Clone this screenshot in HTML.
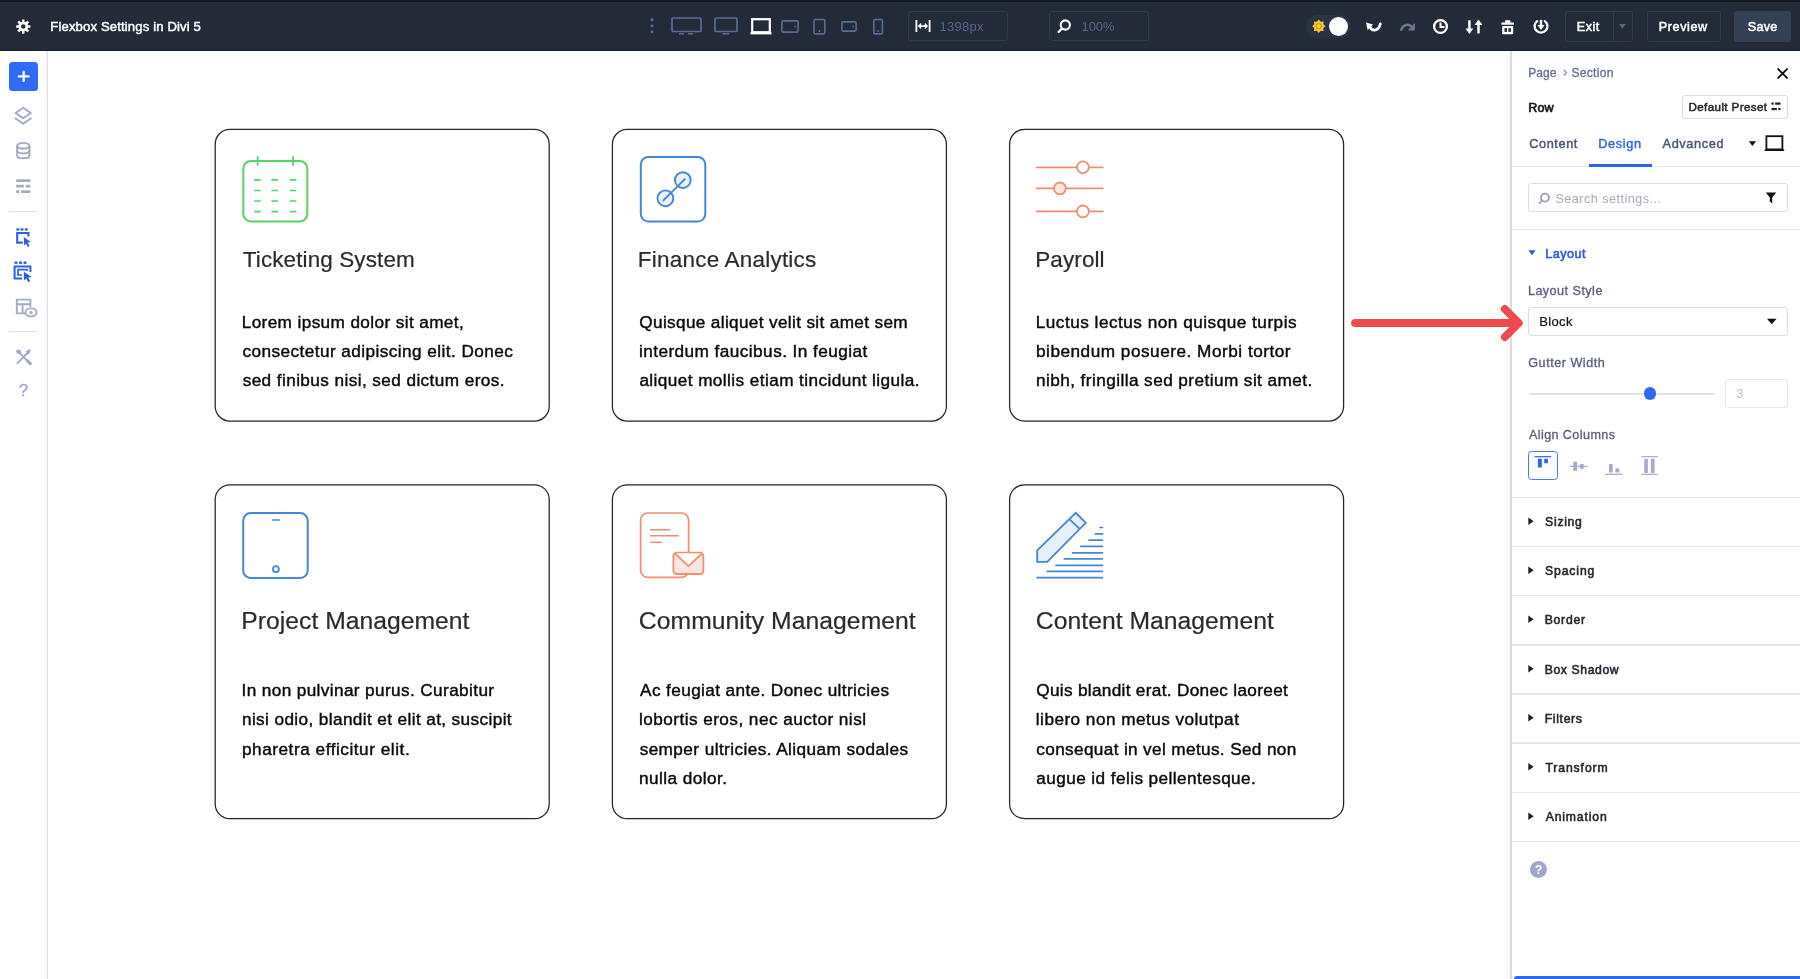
<!DOCTYPE html>
<html lang="en"><head><meta charset="utf-8"><title>Flexbox Settings in Divi 5</title>
<style>
html,body{margin:0;padding:0;}
body{width:1800px;height:979px;overflow:hidden;position:relative;background:#fff;font-family:"Liberation Sans",sans-serif;}
.a{position:absolute;box-sizing:border-box;display:block;}
.t{position:absolute;white-space:nowrap;font-family:"Liberation Sans",sans-serif;}
.card{position:absolute;box-sizing:border-box;border:1.4px solid #1c1c1c;border-radius:17px;background:#fff;}
</style></head><body><div id="root" style="position:absolute;left:0;top:0;width:1800px;height:979px;will-change:transform;">
<div class="a" style="left:0px;top:0px;width:1800px;height:51px;background:#232b39;"></div>
<div class="a" style="left:0px;top:0px;width:1800px;height:2px;background:#14171b;"></div>
<div class="a" style="left:0px;top:49.6px;width:1800px;height:1.3999999999999986px;background:#1a212c;"></div>
<svg class="a" style="left:15px;top:18px;" width="17" height="18" viewBox="0 0 17 18" fill="none"><g transform="translate(0.600 0.900) scale(0.90000 0.90000)"><g fill="#fff"><circle cx="8.5" cy="8.5" r="5.4"/><rect x="7.1" y="0.6" width="2.8" height="4" rx="0.6" transform="rotate(0 8.5 8.5)"/><rect x="7.1" y="0.6" width="2.8" height="4" rx="0.6" transform="rotate(45 8.5 8.5)"/><rect x="7.1" y="0.6" width="2.8" height="4" rx="0.6" transform="rotate(90 8.5 8.5)"/><rect x="7.1" y="0.6" width="2.8" height="4" rx="0.6" transform="rotate(135 8.5 8.5)"/><rect x="7.1" y="0.6" width="2.8" height="4" rx="0.6" transform="rotate(180 8.5 8.5)"/><rect x="7.1" y="0.6" width="2.8" height="4" rx="0.6" transform="rotate(225 8.5 8.5)"/><rect x="7.1" y="0.6" width="2.8" height="4" rx="0.6" transform="rotate(270 8.5 8.5)"/><rect x="7.1" y="0.6" width="2.8" height="4" rx="0.6" transform="rotate(315 8.5 8.5)"/></g><circle cx="8.5" cy="8.5" r="2.5" fill="#232b39"/></g></svg>
<span class="t" style="left:50.25px;top:17.96px;font-size:13.1px;line-height:17px;color:#fff;letter-spacing:0.146px;-webkit-text-stroke:0.45px #fff;">Flexbox Settings in Divi 5</span>
<svg class="a" style="left:649px;top:18px;" width="7" height="18" viewBox="0 0 7 18" fill="none"><g transform="translate(0.000 0.000)"><g fill="#5a6b97"><rect x="1.7" y="0.6" width="2.6" height="2.6" rx="0.6"/><rect x="1.7" y="6.7" width="2.6" height="2.6" rx="0.6"/><rect x="1.7" y="12.6" width="2.6" height="2.6" rx="0.6"/></g></g></svg>
<svg class="a" style="left:671px;top:17px;" width="32" height="19" viewBox="0 0 32 19" fill="none"><g transform="translate(0.000 0.000)"><rect x="1" y="1" width="29" height="13.5" rx="1" stroke="#5a6b97" stroke-width="1.7"/><rect x="8" y="16" width="5" height="1.6" fill="#5a6b97"/><rect x="17" y="16" width="5" height="1.6" fill="#5a6b97"/></g></svg>
<svg class="a" style="left:714px;top:17px;" width="25" height="19" viewBox="0 0 25 19" fill="none"><g transform="translate(0.000 0.000)"><rect x="1" y="1" width="22" height="13.5" rx="1" stroke="#5a6b97" stroke-width="1.7"/><rect x="8.5" y="16" width="7" height="1.6" fill="#5a6b97"/></g></svg>
<svg class="a" style="left:750px;top:18px;" width="23" height="18" viewBox="0 0 23 18" fill="none"><g transform="translate(0.000 0.000)"><rect x="2.2" y="1.2" width="17.6" height="13" stroke="#fff" stroke-width="2.2"/><rect x="0.5" y="14.2" width="21" height="2.2" fill="#fff"/></g></svg>
<svg class="a" style="left:781px;top:20px;" width="19" height="14" viewBox="0 0 19 14" fill="none"><g transform="translate(0.000 0.000)"><rect x="0.9" y="0.9" width="16.2" height="11.2" rx="1.2" stroke="#5a6b97" stroke-width="1.6"/><circle cx="14" cy="6.5" r="0.9" fill="#5a6b97"/></g></svg>
<svg class="a" style="left:812px;top:18px;" width="16" height="18" viewBox="0 0 16 18" fill="none"><g transform="translate(0.600 0.600)"><rect x="1.4" y="0.9" width="10.8" height="14.4" rx="1.2" stroke="#5a6b97" stroke-width="1.6"/><circle cx="6.8" cy="12.4" r="0.9" fill="#5a6b97"/></g></svg>
<svg class="a" style="left:841px;top:21px;" width="17" height="12" viewBox="0 0 17 12" fill="none"><g transform="translate(0.000 0.000)"><rect x="0.9" y="0.9" width="14.2" height="9.2" rx="1.2" stroke="#5a6b97" stroke-width="1.6"/><circle cx="12.2" cy="5.5" r="0.9" fill="#5a6b97"/></g></svg>
<svg class="a" style="left:872px;top:18px;" width="14" height="18" viewBox="0 0 14 18" fill="none"><g transform="translate(0.400 0.600)"><rect x="1.4" y="0.9" width="8.6" height="14.4" rx="1.2" stroke="#5a6b97" stroke-width="1.6"/><circle cx="5.7" cy="12.4" r="0.9" fill="#5a6b97"/></g></svg>
<div class="a" style="left:908px;top:11px;width:100px;height:30px;border:1px solid #2f3a4b;border-radius:3px;"></div>
<svg class="a" style="left:915px;top:20px;" width="17" height="13" viewBox="0 0 17 13" fill="none"><g transform="translate(0.000 0.000)"><g fill="#fff"><rect x="0.5" y="0" width="1.8" height="12"/><rect x="13.7" y="0" width="1.8" height="12"/><rect x="4" y="5.2" width="8" height="1.7"/><path d="M2.8 6 L6.2 2.8 L6.2 9.2 Z"/><path d="M13.2 6 L9.8 2.8 L9.8 9.2 Z"/></g></g></svg>
<span class="t" style="left:939.51px;top:18.20px;font-size:13px;line-height:17px;color:#56668b;letter-spacing:0.295px;">1398px</span>
<div class="a" style="left:1049px;top:11px;width:100px;height:30px;border:1px solid #2f3a4b;border-radius:3px;"></div>
<svg class="a" style="left:1057px;top:19px;" width="16" height="16" viewBox="0 0 16 16" fill="none"><g transform="translate(0.000 0.000)"><circle cx="8.3" cy="6" r="4.6" stroke="#fff" stroke-width="2.1"/><path d="M5 9.5 L1.6 13" stroke="#fff" stroke-width="2.3" stroke-linecap="round"/></g></svg>
<span class="t" style="left:1081.51px;top:18.20px;font-size:13px;line-height:17px;color:#56668b;letter-spacing:-0.099px;">100%</span>
<div class="a" style="left:1306px;top:15px;width:45px;height:23px;background:#293343;border-radius:12px;"></div>
<svg class="a" style="left:1311px;top:19px;" width="16" height="16" viewBox="0 0 16 16" fill="none"><g transform="translate(0.800 0.200)"><polygon points="7.00,0.30 8.88,2.47 11.74,2.26 11.53,5.12 13.70,7.00 11.53,8.88 11.74,11.74 8.88,11.53 7.00,13.70 5.12,11.53 2.26,11.74 2.47,8.88 0.30,7.00 2.47,5.12 2.26,2.26 5.12,2.47" fill="#f6cb2f"/><circle cx="7" cy="7" r="2.5" fill="#f9d648" stroke="#c8901a" stroke-width="1.1"/></g></svg>
<div class="a" style="left:1329.2px;top:16.8px;width:19.200000000000045px;height:19.2px;background:#fff;border-radius:50%;"></div>
<svg class="a" style="left:1365px;top:20px;" width="18" height="13" viewBox="0 0 18 13" fill="none"><g transform="translate(0.000 0.000)"><path d="M5 6.2 C6.2 11.6 13.4 12 15.3 3.9" stroke="#fff" stroke-width="2.7" stroke-linecap="round"/><path d="M1.1 2.6 L8 4.6 L2.6 10.2 Z" fill="#fff"/></g></svg>
<svg class="a" style="left:1399px;top:21px;" width="18" height="12" viewBox="0 0 18 12" fill="none"><g transform="translate(0.600 0.500)"><path d="M1.6 8.2 C3.6 2.6 9.4 2 12.4 5.6" stroke="#6d7890" stroke-width="2.5" stroke-linecap="round"/><path d="M15.3 1.6 L15.3 9 L8 9 Z" fill="#6d7890"/></g></svg>
<svg class="a" style="left:1432px;top:18px;" width="18" height="18" viewBox="0 0 18 18" fill="none"><g transform="translate(0.500 0.500)"><circle cx="8" cy="8" r="6.4" stroke="#fff" stroke-width="2.3"/><path d="M8 4 V8.4 H12" stroke="#fff" stroke-width="2"/></g></svg>
<svg class="a" style="left:1465px;top:19px;" width="19" height="17" viewBox="0 0 19 17" fill="none"><g transform="translate(0.000 0.000)"><g stroke="#fff" stroke-width="2.5"><line x1="4.4" y1="1.3" x2="4.4" y2="11"/><line x1="13.5" y1="5" x2="13.5" y2="14.4"/></g><path d="M0.5 9.6 L4.4 15 L8.3 9.6 Z" fill="#fff"/><path d="M9.6 6 L13.5 0.6 L17.4 6 Z" fill="#fff"/></g></svg>
<svg class="a" style="left:1501px;top:20px;" width="15" height="16" viewBox="0 0 15 16" fill="none"><g transform="translate(0.000 0.000)"><g fill="#fff"><rect x="0.4" y="2.4" width="12.6" height="2.3" rx="0.4"/><rect x="4" y="0.3" width="5.4" height="2.6" rx="0.5"/><rect x="1.2" y="6" width="11" height="8.2" rx="0.8"/></g><g fill="#232b39"><rect x="3.5" y="8.2" width="2.5" height="3.7"/><rect x="7.4" y="8.2" width="2.5" height="3.7"/></g></g></svg>
<svg class="a" style="left:1533px;top:18px;" width="17" height="18" viewBox="0 0 17 18" fill="none"><g transform="translate(0.000 0.500)"><path d="M4.2 2.6 A6.4 6.4 0 1 0 11.8 2.6" stroke="#fff" stroke-width="2.3" stroke-linecap="round"/><line x1="8" y1="1.4" x2="8" y2="8" stroke="#fff" stroke-width="2.4"/><path d="M4.4 6.6 L8 11.4 L11.6 6.6 Z" fill="#fff"/></g></svg>
<div class="a" style="left:1565px;top:11px;width:68px;height:30.6px;border:1px solid #313c4d;border-radius:3px;"></div>
<div class="a" style="left:1613px;top:11px;width:1px;height:30.5px;background:#313c4d;"></div>
<span class="t" style="left:1576.82px;top:18.83px;font-size:12.6px;line-height:16px;color:#fff;letter-spacing:0.509px;-webkit-text-stroke:0.5px #fff;">Exit</span>
<svg class="a" style="left:1619px;top:24px;" width="8" height="6" viewBox="0 0 8 6" fill="none"><g transform="translate(0.000 0.000)"><path d="M0 0 H7 L3.5 4.6 Z" fill="#5a6479"/></g></svg>
<div class="a" style="left:1646.5px;top:11px;width:74.5px;height:30.6px;border:1px solid #313c4d;border-radius:3px;"></div>
<span class="t" style="left:1658.72px;top:18.83px;font-size:12.6px;line-height:16px;color:#fff;letter-spacing:0.618px;-webkit-text-stroke:0.5px #fff;">Preview</span>
<div class="a" style="left:1734px;top:11px;width:57px;height:30.6px;background:#344155;border-radius:3px;"></div>
<span class="t" style="left:1747.68px;top:18.83px;font-size:12.6px;line-height:16px;color:#fff;letter-spacing:0.304px;-webkit-text-stroke:0.5px #fff;">Save</span>
<div class="a" style="left:43px;top:51px;width:5.299999999999997px;height:928px;background:linear-gradient(to right,rgba(205,206,214,0) 0%,rgba(205,206,214,0.08) 60%,rgba(205,206,214,0.3) 80%,#e0e0e4 81%,#e0e0e4 100%);"></div>
<div class="a" style="left:8.9px;top:62.2px;width:28.9px;height:28.599999999999994px;background:#3169f8;border-radius:3.5px;"></div>
<svg class="a" style="left:17px;top:69px;" width="15" height="15" viewBox="0 0 15 15" fill="none"><g transform="translate(0.200 0.900)"><path d="M6.5 2 V11 M1.6 6.5 H11.4" stroke="#fff" stroke-width="2.3" stroke-linecap="round"/></g></svg>
<svg class="a" style="left:13px;top:105px;" width="21" height="23" viewBox="0 0 21 23" fill="none"><g transform="translate(0.000 0.000)"><g stroke="#a3a9c6" stroke-width="1.9" stroke-linejoin="round" stroke-linecap="round"><path d="M10.2 2.8 L17.8 8 L10.2 13.2 L2.6 8 Z"/><path d="M2.6 13.4 L10.2 18.8 L17.8 13.4"/></g></g></svg>
<svg class="a" style="left:15px;top:141px;" width="18" height="20" viewBox="0 0 18 20" fill="none"><g transform="translate(0.000 0.000)"><g stroke="#a3a9c6" stroke-width="1.9"><ellipse cx="8.3" cy="4.8" rx="6.2" ry="2.9"/><path d="M2.1 4.8 V14.4 C2.1 16.2 5 17.3 8.3 17.3 S14.5 16.2 14.5 14.4 V4.8"/><path d="M2.1 9.6 C2.1 11.4 5 12.5 8.3 12.5 S14.5 11.4 14.5 9.6"/></g></g></svg>
<svg class="a" style="left:16px;top:179px;" width="17" height="16" viewBox="0 0 17 16" fill="none"><g transform="translate(0.200 0.000)"><g fill="#a3a9c6"><rect x="0" y="0.3" width="14.2" height="2.7"/><rect x="0" y="5.8" width="7.6" height="2.7"/><rect x="9.4" y="5.8" width="4.8" height="2.7"/><rect x="0" y="11.3" width="3.2" height="2.7"/><rect x="5" y="11.3" width="9.2" height="2.7"/></g></g></svg>
<div class="a" style="left:9px;top:211px;width:29px;height:1px;background:#e1e3ea;"></div>
<svg class="a" style="left:15px;top:228px;" width="19" height="21" viewBox="0 0 19 21" fill="none"><g transform="translate(0.400 0.000)"><g fill="#2b5fe6"><rect x="1" y="0.3" width="2.9" height="2.3"/><rect x="5.2" y="0.3" width="2.9" height="2.3"/><rect x="9.4" y="0.3" width="2.9" height="2.3"/></g><path d="M7.4 14.6 H1.8 V5 H13 V8.6" stroke="#2b5fe6" stroke-width="2.1"/><path d="M8.4 9 L15.4 14 L12.3 14.5 L14.2 18 L12.4 19 L10.6 15.5 L8.6 17.4 Z" fill="#2b5fe6"/></g></svg>
<svg class="a" style="left:13px;top:261px;" width="22" height="23" viewBox="0 0 22 23" fill="none"><g transform="translate(0.000 0.000)"><g fill="#2b5fe6"><rect x="1.5" y="0.5" width="3" height="2.4"/><rect x="6" y="0.5" width="3" height="2.4"/><rect x="10.5" y="0.5" width="3" height="2.4"/></g><path d="M9 17.4 H1.6 V5.4 H17.4 V11" stroke="#2b5fe6" stroke-width="2"/><path d="M9 14 H5 V8.6 H14 V10" stroke="#2b5fe6" stroke-width="1.7"/><path d="M10.8 10.8 L18.8 16 L15.3 16.6 L17.2 20.2 L15.2 21.2 L13.4 17.6 L11.1 19.6 Z" fill="#2b5fe6"/></g></svg>
<svg class="a" style="left:15px;top:298px;" width="25" height="21" viewBox="0 0 25 21" fill="none"><g transform="translate(0.400 0.000)"><g stroke="#a3a9c6" stroke-width="1.9"><path d="M9.6 15.4 H1.4 V1.6 H15 V9"/><path d="M1.4 6.2 H15 M7.2 6.2 V15.4"/><ellipse cx="15.6" cy="14.4" rx="5.6" ry="4" fill="#fff"/></g><circle cx="15.6" cy="14.4" r="1.7" fill="#a3a9c6"/></g></svg>
<div class="a" style="left:9px;top:331px;width:29px;height:1px;background:#e1e3ea;"></div>
<svg class="a" style="left:15px;top:348px;" width="18" height="19" viewBox="0 0 18 19" fill="none"><g transform="translate(0.500 0.500)"><g stroke="#a3a9c6" stroke-width="1.9" stroke-linecap="round"><path d="M2 14.6 L11.6 5"/><path d="M4.6 5 L13.4 13.8"/></g><path d="M10.4 2.6 L14.4 0.8 L15.4 1.8 L13.6 5.8 L11.4 5.8 Z" fill="#a3a9c6"/><path d="M0.8 1.8 C2.4 0.2 5.4 0.8 5.8 3.8 L4 5.8 C1 5.4 0 3 0.8 1.8 Z" fill="#a3a9c6"/><path d="M12 12.4 L14.8 15.2" stroke="#a3a9c6" stroke-width="3.2" stroke-linecap="round"/></g></svg>
<span class="t" style="left:18.85px;top:380.41px;font-size:17px;line-height:22px;color:#a3a9c6;letter-spacing:-0.441px;-webkit-text-stroke:0.3px #a3a9c6;">?</span>
<svg class="a" style="left:213px;top:127px;" width="340" height="298" viewBox="0 0 340 298" fill="none"><g transform="translate(0.200 0.400)"><rect x="2" y="2" width="334" height="291.7" rx="14.8" fill="#fff" stroke="#242424" stroke-width="1.25"/></g></svg>
<svg class="a" style="left:610px;top:127px;" width="340" height="298" viewBox="0 0 340 298" fill="none"><g transform="translate(0.400 0.400)"><rect x="2" y="2" width="334" height="291.7" rx="14.8" fill="#fff" stroke="#242424" stroke-width="1.25"/></g></svg>
<svg class="a" style="left:1007px;top:127px;" width="340" height="298" viewBox="0 0 340 298" fill="none"><g transform="translate(0.600 0.400)"><rect x="2" y="2" width="334" height="291.7" rx="14.8" fill="#fff" stroke="#242424" stroke-width="1.25"/></g></svg>
<svg class="a" style="left:213px;top:482px;" width="340" height="340" viewBox="0 0 340 340" fill="none"><g transform="translate(0.200 0.800)"><rect x="2" y="2" width="334" height="333.9" rx="14.8" fill="#fff" stroke="#242424" stroke-width="1.25"/></g></svg>
<svg class="a" style="left:610px;top:482px;" width="340" height="340" viewBox="0 0 340 340" fill="none"><g transform="translate(0.400 0.800)"><rect x="2" y="2" width="334" height="333.9" rx="14.8" fill="#fff" stroke="#242424" stroke-width="1.25"/></g></svg>
<svg class="a" style="left:1007px;top:482px;" width="340" height="340" viewBox="0 0 340 340" fill="none"><g transform="translate(0.600 0.800)"><rect x="2" y="2" width="334" height="333.9" rx="14.8" fill="#fff" stroke="#242424" stroke-width="1.25"/></g></svg>
<svg class="a" style="left:242px;top:156px;" width="68" height="68" viewBox="0 0 68 68" fill="none"><g transform="translate(0.300 0.000)"><rect x="1" y="5" width="64" height="60.5" rx="7.5" stroke="#52d468" stroke-width="2"/><g stroke="#52d468" stroke-width="1.8" stroke-linecap="round"><line x1="15.4" y1="1" x2="15.4" y2="9"/><line x1="50.8" y1="1" x2="50.8" y2="9"/></g><g stroke="#52d468" stroke-width="1.7" stroke-linecap="round"><line x1="12.6" y1="23.9" x2="17.8" y2="23.9"/><line x1="12.6" y1="34.5" x2="17.8" y2="34.5"/><line x1="12.6" y1="45" x2="17.8" y2="45"/><line x1="12.6" y1="55.6" x2="17.8" y2="55.6"/><line x1="29.799999999999997" y1="23.9" x2="35.0" y2="23.9"/><line x1="29.799999999999997" y1="34.5" x2="35.0" y2="34.5"/><line x1="29.799999999999997" y1="45" x2="35.0" y2="45"/><line x1="29.799999999999997" y1="55.6" x2="35.0" y2="55.6"/><line x1="48.199999999999996" y1="23.9" x2="53.4" y2="23.9"/><line x1="48.199999999999996" y1="34.5" x2="53.4" y2="34.5"/><line x1="48.199999999999996" y1="45" x2="53.4" y2="45"/><line x1="48.199999999999996" y1="55.6" x2="53.4" y2="55.6"/></g></g></svg>
<svg class="a" style="left:639px;top:156px;" width="69" height="69" viewBox="0 0 69 69" fill="none"><g transform="translate(0.800 0.100)"><rect x="1" y="1" width="64.5" height="64.5" rx="7.5" stroke="#4587d6" stroke-width="2"/><g stroke="#4587d6" stroke-width="1.9" fill="#e9f1fb"><circle cx="43" cy="24" r="7.9"/><circle cx="25.6" cy="42.2" r="7.9"/></g><line x1="23.6" y1="44.2" x2="45" y2="23" stroke="#4587d6" stroke-width="1.9" stroke-linecap="round"/></g></svg>
<svg class="a" style="left:1035px;top:156px;" width="70" height="65" viewBox="0 0 70 65" fill="none"><g transform="translate(0.800 0.000)"><g stroke="#f28d70" stroke-width="1.8" stroke-linecap="round"><line x1="1" y1="11.3" x2="67" y2="11.3"/><line x1="1" y1="32.4" x2="67" y2="32.4"/><line x1="1" y1="55.4" x2="67" y2="55.4"/></g><g stroke="#f28d70" stroke-width="1.8"><circle cx="47.1" cy="11.3" r="5.9" fill="#fff"/><circle cx="24.1" cy="32.4" r="5.9" fill="#fbe7e1"/><circle cx="47.1" cy="55.4" r="5.9" fill="#fff"/></g></g></svg>
<svg class="a" style="left:242px;top:512px;" width="69" height="69" viewBox="0 0 69 69" fill="none"><g transform="translate(0.200 0.000)"><rect x="1" y="1" width="64.5" height="65" rx="7.5" stroke="#4587d6" stroke-width="2"/><line x1="30.4" y1="8" x2="37" y2="8" stroke="#4587d6" stroke-width="1.7" stroke-linecap="round"/><circle cx="33.7" cy="57.2" r="3" stroke="#4587d6" stroke-width="1.7" fill="#eef5fd"/></g></svg>
<svg class="a" style="left:639px;top:512px;" width="68" height="69" viewBox="0 0 68 69" fill="none"><g transform="translate(0.600 0.000)"><rect x="1" y="1" width="48" height="64.3" rx="7" stroke="#f28d70" stroke-width="1.7"/><g stroke="#f28d70" stroke-width="1.6" stroke-linecap="round"><line x1="11" y1="17.7" x2="30" y2="17.7"/><line x1="11" y1="23.8" x2="38.5" y2="23.8"/><line x1="11" y1="30.2" x2="21.7" y2="30.2"/></g><rect x="33.8" y="40.6" width="30" height="21.4" rx="3.4" stroke="#f28d70" stroke-width="1.8" fill="#fbe6e0"/><path d="M35.6 41.6 L48.9 54.2 L62.2 41.6" stroke="#f28d70" stroke-width="1.8" fill="#fff" stroke-linejoin="round"/></g></svg>
<svg class="a" style="left:1036px;top:511px;" width="70" height="70" viewBox="0 0 70 70" fill="none"><g transform="translate(0.200 0.200)"><path d="M1 50.6 V39.2 L39.6 1.6 L49.6 11.6 L11 50.6 Z" stroke="#4587d6" stroke-width="1.8" fill="#e6effa" stroke-linejoin="miter"/><line x1="33.1" y1="8" x2="43.2" y2="17.4" stroke="#4587d6" stroke-width="1.8"/><g stroke="#4587d6" stroke-width="1.7" stroke-linecap="round"><line x1="63.9" y1="16.3" x2="66.3" y2="16.3"/><line x1="59.3" y1="22.7" x2="66.3" y2="22.7"/><line x1="52.9" y1="29" x2="66.3" y2="29"/><line x1="44.6" y1="35.1" x2="66.3" y2="35.1"/><line x1="36.3" y1="41.6" x2="66.3" y2="41.6"/><line x1="28.1" y1="47.6" x2="66.3" y2="47.6"/><line x1="19.8" y1="54.1" x2="66.3" y2="54.1"/><line x1="11.1" y1="60.2" x2="66.3" y2="60.2"/><line x1="0.9" y1="66.5" x2="66.3" y2="66.5"/></g></g></svg>
<span class="t" style="left:242.79px;top:244.70px;font-size:22.5px;line-height:29px;color:#2a2a2a;letter-spacing:0.101px;-webkit-text-stroke:0.2px #2a2a2a;">Ticketing System</span>
<span class="t" style="left:637.85px;top:244.70px;font-size:22.5px;line-height:29px;color:#2a2a2a;letter-spacing:0.210px;-webkit-text-stroke:0.2px #2a2a2a;">Finance Analytics</span>
<span class="t" style="left:1035.25px;top:244.70px;font-size:22.5px;line-height:29px;color:#2a2a2a;letter-spacing:0.095px;-webkit-text-stroke:0.2px #2a2a2a;">Payroll</span>
<span class="t" style="left:241.37px;top:605.24px;font-size:24.7px;line-height:32px;color:#2a2a2a;letter-spacing:0.018px;-webkit-text-stroke:0.2px #2a2a2a;">Project Management</span>
<span class="t" style="left:638.85px;top:605.24px;font-size:24.7px;line-height:32px;color:#2a2a2a;letter-spacing:0.055px;-webkit-text-stroke:0.2px #2a2a2a;">Community Management</span>
<span class="t" style="left:1035.85px;top:605.24px;font-size:24.7px;line-height:32px;color:#2a2a2a;letter-spacing:0.035px;-webkit-text-stroke:0.2px #2a2a2a;">Content Management</span>
<span class="t" style="left:241.70px;top:310.84px;font-size:17.2px;line-height:22px;color:#080808;letter-spacing:0.384px;-webkit-text-stroke:0.42px #080808;">Lorem ipsum dolor sit amet,</span>
<span class="t" style="left:242.38px;top:340.09px;font-size:17.2px;line-height:22px;color:#080808;letter-spacing:0.440px;-webkit-text-stroke:0.42px #080808;">consectetur adipiscing elit. Donec</span>
<span class="t" style="left:242.63px;top:369.34px;font-size:17.2px;line-height:22px;color:#080808;letter-spacing:0.410px;-webkit-text-stroke:0.42px #080808;">sed finibus nisi, sed dictum eros.</span>
<span class="t" style="left:639.30px;top:310.84px;font-size:17.2px;line-height:22px;color:#080808;letter-spacing:0.344px;-webkit-text-stroke:0.42px #080808;">Quisque aliquet velit sit amet sem</span>
<span class="t" style="left:638.96px;top:340.09px;font-size:17.2px;line-height:22px;color:#080808;letter-spacing:0.444px;-webkit-text-stroke:0.42px #080808;">interdum faucibus. In feugiat</span>
<span class="t" style="left:639.38px;top:369.34px;font-size:17.2px;line-height:22px;color:#080808;letter-spacing:0.417px;-webkit-text-stroke:0.42px #080808;">aliquet mollis etiam tincidunt ligula.</span>
<span class="t" style="left:1035.70px;top:310.84px;font-size:17.2px;line-height:22px;color:#080808;letter-spacing:0.495px;-webkit-text-stroke:0.42px #080808;">Luctus lectus non quisque turpis</span>
<span class="t" style="left:1036.00px;top:340.09px;font-size:17.2px;line-height:22px;color:#080808;letter-spacing:0.510px;-webkit-text-stroke:0.42px #080808;">bibendum posuere. Morbi tortor</span>
<span class="t" style="left:1035.97px;top:369.34px;font-size:17.2px;line-height:22px;color:#080808;letter-spacing:0.430px;-webkit-text-stroke:0.42px #080808;">nibh, fringilla sed pretium sit amet.</span>
<span class="t" style="left:241.52px;top:679.04px;font-size:17.2px;line-height:22px;color:#080808;letter-spacing:0.380px;-webkit-text-stroke:0.42px #080808;">In non pulvinar purus. Curabitur</span>
<span class="t" style="left:241.97px;top:708.34px;font-size:17.2px;line-height:22px;color:#080808;letter-spacing:0.383px;-webkit-text-stroke:0.42px #080808;">nisi odio, blandit et elit at, suscipit</span>
<span class="t" style="left:242.00px;top:737.64px;font-size:17.2px;line-height:22px;color:#080808;letter-spacing:0.533px;-webkit-text-stroke:0.42px #080808;">pharetra efficitur elit.</span>
<span class="t" style="left:640.08px;top:679.04px;font-size:17.2px;line-height:22px;color:#080808;letter-spacing:0.387px;-webkit-text-stroke:0.42px #080808;">Ac feugiat ante. Donec ultricies</span>
<span class="t" style="left:638.95px;top:708.34px;font-size:17.2px;line-height:22px;color:#080808;letter-spacing:0.451px;-webkit-text-stroke:0.42px #080808;">lobortis eros, nec auctor nisl</span>
<span class="t" style="left:639.63px;top:737.64px;font-size:17.2px;line-height:22px;color:#080808;letter-spacing:0.422px;-webkit-text-stroke:0.42px #080808;">semper ultricies. Aliquam sodales</span>
<span class="t" style="left:638.97px;top:766.94px;font-size:17.2px;line-height:22px;color:#080808;letter-spacing:0.450px;-webkit-text-stroke:0.42px #080808;">nulla dolor.</span>
<span class="t" style="left:1036.20px;top:679.04px;font-size:17.2px;line-height:22px;color:#080808;letter-spacing:0.319px;-webkit-text-stroke:0.42px #080808;">Quis blandit erat. Donec laoreet</span>
<span class="t" style="left:1035.85px;top:708.34px;font-size:17.2px;line-height:22px;color:#080808;letter-spacing:0.459px;-webkit-text-stroke:0.42px #080808;">libero non metus volutpat</span>
<span class="t" style="left:1036.28px;top:737.64px;font-size:17.2px;line-height:22px;color:#080808;letter-spacing:0.355px;-webkit-text-stroke:0.42px #080808;">consequat in vel metus. Sed non</span>
<span class="t" style="left:1036.28px;top:766.94px;font-size:17.2px;line-height:22px;color:#080808;letter-spacing:0.417px;-webkit-text-stroke:0.42px #080808;">augue id felis pellentesque.</span>
<div class="a" style="left:1511px;top:51px;width:289px;height:928px;background:#fff;"></div>
<div class="a" style="left:1505px;top:51px;width:7px;height:928px;background:linear-gradient(to right,rgba(200,201,210,0) 0%,rgba(200,201,210,0.06) 55%,rgba(205,206,214,0.28) 76%,#dbdbdf 77%,#dbdbdf 100%);"></div>
<span class="t" style="left:1528.17px;top:65.14px;font-size:12px;line-height:16px;color:#626b90;letter-spacing:0.062px;-webkit-text-stroke:0.3px #626b90;">Page</span>
<svg class="a" style="left:1562px;top:68px;" width="7" height="10" viewBox="0 0 7 10" fill="none"><g transform="translate(0.600 0.800)"><path d="M1 1 L4 4 L1 7" stroke="#9097b5" stroke-width="1.3"/></g></svg>
<span class="t" style="left:1571.41px;top:65.14px;font-size:12px;line-height:16px;color:#626b90;letter-spacing:0.332px;-webkit-text-stroke:0.3px #626b90;">Section</span>
<svg class="a" style="left:1776px;top:67px;" width="14" height="14" viewBox="0 0 14 14" fill="none"><g transform="translate(0.600 0.500)"><path d="M1.6 1.6 L10.4 10.4 M10.4 1.6 L1.6 10.4" stroke="#0d0d0f" stroke-width="1.9" stroke-linecap="round"/></g></svg>
<span class="t" style="left:1528.19px;top:99.63px;font-size:12.6px;line-height:16px;color:#14171f;letter-spacing:0.125px;-webkit-text-stroke:0.65px #14171f;">Row</span>
<div class="a" style="left:1681.6px;top:94.6px;width:106.0px;height:24.80000000000001px;border:1px solid #dcdde3;border-radius:3px;"></div>
<span class="t" style="left:1688.50px;top:99.28px;font-size:11.6px;line-height:15px;color:#22252d;letter-spacing:0.390px;-webkit-text-stroke:0.5px #22252d;">Default Preset</span>
<svg class="a" style="left:1771px;top:102px;" width="11" height="10" viewBox="0 0 11 10" fill="none"><g transform="translate(0.500 0.500)"><g fill="#1b1d23"><rect x="0" y="0" width="2.2" height="2.2"/><rect x="3.6" y="0" width="5.4" height="2.2"/><rect x="0" y="5.4" width="5.4" height="2.2"/><rect x="6.8" y="5.4" width="2.2" height="2.2"/></g></g></svg>
<span class="t" style="left:1529.18px;top:136.10px;font-size:12.7px;line-height:17px;color:#4b5475;letter-spacing:0.625px;-webkit-text-stroke:0.45px #4b5475;">Content</span>
<span class="t" style="left:1598.18px;top:136.10px;font-size:12.7px;line-height:17px;color:#3366e0;letter-spacing:0.663px;-webkit-text-stroke:0.45px #3366e0;">Design</span>
<span class="t" style="left:1662.50px;top:136.10px;font-size:12.7px;line-height:17px;color:#4b5475;letter-spacing:0.665px;-webkit-text-stroke:0.45px #4b5475;">Advanced</span>
<svg class="a" style="left:1748px;top:141px;" width="10" height="7" viewBox="0 0 10 7" fill="none"><g transform="translate(0.800 0.000)"><path d="M0 0.2 H7.2 L3.6 4.9 Z" fill="#111"/></g></svg>
<svg class="a" style="left:1764px;top:135px;" width="22" height="18" viewBox="0 0 22 18" fill="none"><g transform="translate(0.000 0.000)"><rect x="2.4" y="1.2" width="16" height="13.2" stroke="#111" stroke-width="1.8"/><rect x="0.6" y="14.4" width="19.6" height="1.6" fill="#111"/></g></svg>
<div class="a" style="left:1512px;top:166px;width:288px;height:1px;background:#e4e5e8;"></div>
<div class="a" style="left:1588.5px;top:163.5px;width:63.0px;height:3.0px;background:#2b66e8;"></div>
<div class="a" style="left:1528.3px;top:183.2px;width:259.29999999999995px;height:29.0px;border:1px solid #dcdde3;border-radius:3px;"></div>
<svg class="a" style="left:1538px;top:192px;" width="14" height="14" viewBox="0 0 14 14" fill="none"><g transform="translate(0.000 0.000)"><circle cx="7" cy="5.6" r="4" stroke="#9a9fb3" stroke-width="1.8"/><path d="M4 8.6 L1.6 11.1" stroke="#9a9fb3" stroke-width="2" stroke-linecap="round"/></g></svg>
<span class="t" style="left:1555.43px;top:190.73px;font-size:12.6px;line-height:16px;color:#a6a9b9;letter-spacing:0.483px;">Search settings...</span>
<svg class="a" style="left:1765px;top:192px;" width="13" height="13" viewBox="0 0 13 13" fill="none"><g transform="translate(0.500 0.000)"><path d="M0.3 0.6 H10.7 L6.7 5.6 V11.4 L4.3 9.6 V5.6 Z" fill="#111"/></g></svg>
<div class="a" style="left:1512px;top:229px;width:288px;height:1px;background:#e4e5e8;"></div>
<svg class="a" style="left:1528px;top:250px;" width="10" height="7" viewBox="0 0 10 7" fill="none"><g transform="translate(0.200 0.000)"><path d="M0.2 0.3 H7.4 L3.8 5.2 Z" fill="#2c59de"/></g></svg>
<span class="t" style="left:1545.27px;top:246.43px;font-size:12.6px;line-height:16px;color:#2c59de;letter-spacing:0.503px;-webkit-text-stroke:0.6px #2c59de;">Layout</span>
<span class="t" style="left:1527.92px;top:283.13px;font-size:12.6px;line-height:16px;color:#565d7c;letter-spacing:0.471px;-webkit-text-stroke:0.3px #565d7c;">Layout Style</span>
<div class="a" style="left:1528.3px;top:306.8px;width:259.29999999999995px;height:29.19999999999999px;border:1px solid #dcdde3;border-radius:3px;"></div>
<span class="t" style="left:1539.23px;top:313.20px;font-size:13px;line-height:17px;color:#111;letter-spacing:0.363px;-webkit-text-stroke:0.2px #111;">Block</span>
<svg class="a" style="left:1767px;top:318px;" width="11" height="8" viewBox="0 0 11 8" fill="none"><g transform="translate(0.000 0.500)"><path d="M0 0.2 H9.6 L4.8 5.8 Z" fill="#111"/></g></svg>
<span class="t" style="left:1528.32px;top:355.23px;font-size:12.6px;line-height:16px;color:#565d7c;letter-spacing:0.515px;-webkit-text-stroke:0.3px #565d7c;">Gutter Width</span>
<div class="a" style="left:1528.5px;top:392.5px;width:186.0px;height:2.1000000000000227px;background:#dfe1e6;border-radius:1px;"></div>
<div class="a" style="left:1643.6px;top:387px;width:12.800000000000182px;height:12.800000000000011px;background:#2d6af1;border-radius:50%;"></div>
<div class="a" style="left:1725px;top:379px;width:62.5px;height:28.5px;border:1px solid #e4e6eb;border-radius:3px;"></div>
<span class="t" style="left:1736.32px;top:385.63px;font-size:12.6px;line-height:16px;color:#b7bac5;">3</span>
<span class="t" style="left:1528.93px;top:427.43px;font-size:12.6px;line-height:16px;color:#565d7c;letter-spacing:0.406px;-webkit-text-stroke:0.3px #565d7c;">Align Columns</span>
<div class="a" style="left:1528.3px;top:451px;width:29.5px;height:29.30000000000001px;border:1.3px solid #4a76ee;border-radius:3.5px;background:#fbfcff;"></div>
<svg class="a" style="left:1520px;top:445px;" width="151" height="46" viewBox="0 0 151 46" fill="none"><g transform="translate(0.000 0.000)"><rect x="14.60" y="11.10" width="16.60" height="1.20" rx="0" fill="#2b66e8"/><rect x="17.90" y="13.80" width="3.90" height="8.70" rx="0.6" fill="#2b66e8"/><rect x="24.20" y="13.80" width="3.70" height="4.50" rx="0.6" fill="#2b66e8"/><rect x="50.00" y="20.70" width="17.50" height="1.20" rx="0" fill="#a5abc9"/><rect x="53.30" y="16.70" width="3.80" height="9.10" rx="0.6" fill="#a5abc9"/><rect x="60.00" y="19.00" width="3.80" height="4.80" rx="0.6" fill="#a5abc9"/><rect x="85.40" y="28.70" width="17.10" height="1.20" rx="0" fill="#a5abc9"/><rect x="89.00" y="19.00" width="3.70" height="8.50" rx="0.6" fill="#a5abc9"/><rect x="95.40" y="23.20" width="3.80" height="4.30" rx="0.6" fill="#a5abc9"/><rect x="121.30" y="11.10" width="16.60" height="1.20" rx="0" fill="#a5abc9"/><rect x="121.30" y="28.70" width="16.60" height="1.20" rx="0" fill="#a5abc9"/><rect x="124.20" y="13.80" width="3.70" height="14.10" rx="0.6" fill="#a5abc9"/><rect x="130.80" y="13.80" width="3.80" height="14.10" rx="0.6" fill="#a5abc9"/></g></svg>
<div class="a" style="left:1512px;top:496.7px;width:288px;height:1.6000000000000227px;background:#e5e6e9;"></div>
<div class="a" style="left:1512px;top:545.7px;width:288px;height:1.599999999999909px;background:#e5e6e9;"></div>
<div class="a" style="left:1512px;top:594.7px;width:288px;height:1.599999999999909px;background:#e5e6e9;"></div>
<div class="a" style="left:1512px;top:644.2px;width:288px;height:1.599999999999909px;background:#e5e6e9;"></div>
<div class="a" style="left:1512px;top:693.2px;width:288px;height:1.599999999999909px;background:#e5e6e9;"></div>
<div class="a" style="left:1512px;top:742.2px;width:288px;height:1.599999999999909px;background:#e5e6e9;"></div>
<div class="a" style="left:1512px;top:791.7px;width:288px;height:1.599999999999909px;background:#e5e6e9;"></div>
<div class="a" style="left:1512px;top:840.7px;width:288px;height:1.599999999999909px;background:#e5e6e9;"></div>
<svg class="a" style="left:1528px;top:517px;" width="7" height="11" viewBox="0 0 7 11" fill="none"><g transform="translate(0.000 0.300)"><path d="M0.3 0.2 L5.6 4 L0.3 7.8 Z" fill="#1b1d23"/></g></svg>
<span class="t" style="left:1545.12px;top:514.47px;font-size:12.2px;line-height:16px;color:#22252d;letter-spacing:0.717px;-webkit-text-stroke:0.55px #22252d;">Sizing</span>
<svg class="a" style="left:1528px;top:566px;" width="7" height="11" viewBox="0 0 7 11" fill="none"><g transform="translate(0.000 0.300)"><path d="M0.3 0.2 L5.6 4 L0.3 7.8 Z" fill="#1b1d23"/></g></svg>
<span class="t" style="left:1545.12px;top:563.47px;font-size:12.2px;line-height:16px;color:#22252d;letter-spacing:0.857px;-webkit-text-stroke:0.55px #22252d;">Spacing</span>
<svg class="a" style="left:1528px;top:615px;" width="7" height="11" viewBox="0 0 7 11" fill="none"><g transform="translate(0.000 0.300)"><path d="M0.3 0.2 L5.6 4 L0.3 7.8 Z" fill="#1b1d23"/></g></svg>
<span class="t" style="left:1544.67px;top:612.47px;font-size:12.2px;line-height:16px;color:#22252d;letter-spacing:0.772px;-webkit-text-stroke:0.55px #22252d;">Border</span>
<svg class="a" style="left:1528px;top:664px;" width="7" height="11" viewBox="0 0 7 11" fill="none"><g transform="translate(0.000 0.800)"><path d="M0.3 0.2 L5.6 4 L0.3 7.8 Z" fill="#1b1d23"/></g></svg>
<span class="t" style="left:1544.67px;top:661.97px;font-size:12.2px;line-height:16px;color:#22252d;letter-spacing:0.620px;-webkit-text-stroke:0.55px #22252d;">Box Shadow</span>
<svg class="a" style="left:1528px;top:713px;" width="7" height="11" viewBox="0 0 7 11" fill="none"><g transform="translate(0.000 0.800)"><path d="M0.3 0.2 L5.6 4 L0.3 7.8 Z" fill="#1b1d23"/></g></svg>
<span class="t" style="left:1544.67px;top:710.97px;font-size:12.2px;line-height:16px;color:#22252d;letter-spacing:0.684px;-webkit-text-stroke:0.55px #22252d;">Filters</span>
<svg class="a" style="left:1528px;top:762px;" width="7" height="11" viewBox="0 0 7 11" fill="none"><g transform="translate(0.000 0.800)"><path d="M0.3 0.2 L5.6 4 L0.3 7.8 Z" fill="#1b1d23"/></g></svg>
<span class="t" style="left:1545.40px;top:759.97px;font-size:12.2px;line-height:16px;color:#22252d;letter-spacing:0.906px;-webkit-text-stroke:0.55px #22252d;">Transform</span>
<svg class="a" style="left:1528px;top:812px;" width="7" height="11" viewBox="0 0 7 11" fill="none"><g transform="translate(0.000 0.300)"><path d="M0.3 0.2 L5.6 4 L0.3 7.8 Z" fill="#1b1d23"/></g></svg>
<span class="t" style="left:1545.65px;top:809.47px;font-size:12.2px;line-height:16px;color:#22252d;letter-spacing:0.858px;-webkit-text-stroke:0.55px #22252d;">Animation</span>
<div class="a" style="left:1530px;top:861px;width:17px;height:17px;background:#a2a6ca;border-radius:50%;"></div>
<span class="t" style="left:1534.83px;top:862.27px;font-size:12.5px;line-height:16px;color:#fff;font-weight:700;">?</span>
<div class="a" style="left:1514px;top:976px;width:286px;height:6px;background:#2e66ee;border-radius:3px 0 0 0;"></div>
<svg class="a" style="left:1340px;top:295px;" width="191" height="57" viewBox="0 0 191 57" fill="none"><g transform="translate(0.000 0.000)"><g stroke="#ee4a4f" stroke-linecap="round" stroke-linejoin="round" fill="none"><line x1="15" y1="28" x2="176" y2="28" stroke-width="7.8"/><path d="M164.8 14 L178.8 28 L164.8 42" stroke-width="7.8"/></g></g></svg>
</div></body></html>
